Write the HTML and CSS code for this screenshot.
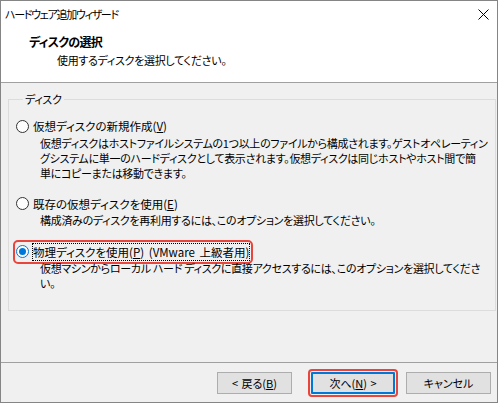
FILE: index.html
```html
<!DOCTYPE html>
<html lang="ja">
<head>
<meta charset="utf-8">
<title>ハードウェア追加ウィザード</title>
<link rel="stylesheet" href="styles.css">
</head>
<body>
<div class="window">
  <div class="top">
    <div class="titlebar">
      <span class="title">ハードウェア追加ウィザード</span>
      <svg class="close" width="11" height="11" viewBox="0 0 11 11"><path d="M0.5 0.5L10.5 10.5M10.5 0.5L0.5 10.5" stroke="#000" stroke-width="1" fill="none"/></svg>
    </div>
    <div class="header">
      <div class="h-title">ディスクの選択</div>
      <div class="h-sub">使用するディスクを選択してください。</div>
    </div>
  </div>
  <div class="content">
    <fieldset class="group">
      <legend class="legend">ディスク</legend>
      <div class="option">
        <div class="row"><span class="radio"></span><span class="label">仮想ディスクの新規作成(<u>V</u>)</span></div>
        <div class="desc">仮想ディスクはホストファイルシステムの1つ以上のファイルから構成されます。ゲストオペレーティン<br>グシステムに単一のハードディスクとして表示されます。仮想ディスクは同じホストやホスト間で簡<br>単にコピーまたは移動できます。</div>
      </div>
      <div class="option">
        <div class="row"><span class="radio"></span><span class="label">既存の仮想ディスクを使用(<u>E</u>)</span></div>
        <div class="desc">構成済みのディスクを再利用するには、このオプションを選択してください。</div>
      </div>
      <div class="option">
        <div class="row row-marked"><span class="radio radio-on"></span><span class="label label-focus">物理ディスクを使用(<u>P</u>) (VMware 上級者用)</span></div>
        <div class="desc">仮想マシンからローカル ハード ディスクに直接アクセスするには、このオプションを選択してくださ<br>い。</div>
      </div>
    </fieldset>
  </div>
  <div class="footer">
    <button class="btn btn-back">&lt; 戻る(<u>B</u>)</button>
    <button class="btn btn-next">次へ(<u>N</u>) &gt;</button>
    <button class="btn btn-cancel">キャンセル</button>
  </div>
</div>
</body>
</html>
```

FILE: styles.css
```css
* {
  box-sizing: border-box;
}

html, body {
  margin: 0;
  padding: 0;
  background: #ffffff;
}

body {
  font-family: "Noto Sans CJK JP", "Noto Sans", sans-serif;
  font-size: 11px;
  letter-spacing: -0.3px;
  font-feature-settings: "palt";
  color: #000;
}

.window {
  width: 498px;
  height: 403px;
  border: 1px solid #858585;
  display: flex;
  flex-direction: column;
  background: #f0f0f0;
}

.top {
  background: #ffffff;
  height: 82px;
  border-bottom: 1px solid #a0a0a0;
  display: flex;
  flex-direction: column;
}

.titlebar {
  height: 26px;
  display: flex;
  align-items: center;
  justify-content: space-between;
  padding: 0 8px 0 4px;
}

.title {
  line-height: 16px;
  letter-spacing: -1.3px;
}

.close {
  display: block;
}

.header {
  padding: 6px 0 0 28px;
}

.h-title {
  font-weight: bold;
  font-size: 12px;
  letter-spacing: -0.7px;
  line-height: 18px;
}

.h-sub {
  line-height: 18px;
  padding-left: 28px;
}

.content {
  flex: 1;
  padding: 9px 7px 0 7px;
}

.group {
  margin: 0;
  height: 219px;
  border: 1px solid #dcdcdc;
  padding: 11px 7px 0 7px;
}

.legend {
  padding: 0 2px;
  margin-left: 7px;
  line-height: 14px;
}

.option + .option {
  margin-top: 14px;
}

.row {
  display: inline-flex;
  align-items: center;
  height: 18px;
  gap: 3px;
}

.row-marked {
  outline: 2px solid #e8453c;
  outline-offset: 1px;
  border-radius: 2px;
}

.radio {
  width: 13px;
  height: 13px;
  border: 1px solid #333;
  border-radius: 50%;
  background: #fff;
  display: flex;
  align-items: center;
  justify-content: center;
}

.radio-on {
  border-color: #0078d7;
}

.radio-on::after {
  content: "";
  width: 7px;
  height: 7px;
  border-radius: 50%;
  background: #0078d7;
}

.label {
  border: 1px dotted transparent;
  line-height: 16px;
  font-size: 11.5px;
  letter-spacing: 0;
  word-spacing: 2px;
  white-space: nowrap;
}

.label-focus {
  border-color: #000;
}

.desc {
  margin-left: 24px;
  line-height: 15px;
  white-space: nowrap;
}

.footer {
  height: 40px;
  border-top: 1px solid #a0a0a0;
  display: flex;
  align-items: center;
  justify-content: flex-end;
  padding-right: 6px;
}

.btn {
  font-family: "Noto Sans CJK JP", "Noto Sans", sans-serif;
  font-size: 11px;
  letter-spacing: 0;
  word-spacing: 1px;
  font-feature-settings: "palt";
  height: 22px;
  background: #e1e1e1;
  border: 1px solid #adadad;
  padding: 0;
  color: #000;
  line-height: 18px;
}

.btn-back {
  width: 75px;
}

.btn-next {
  width: 84px;
  margin-left: 19px;
  border: 2px solid #0078d7;
  outline: 2px solid #e8453c;
  outline-offset: 1px;
  border-radius: 1px;
}

.btn-cancel {
  width: 85px;
  margin-left: 11px;
}
```
